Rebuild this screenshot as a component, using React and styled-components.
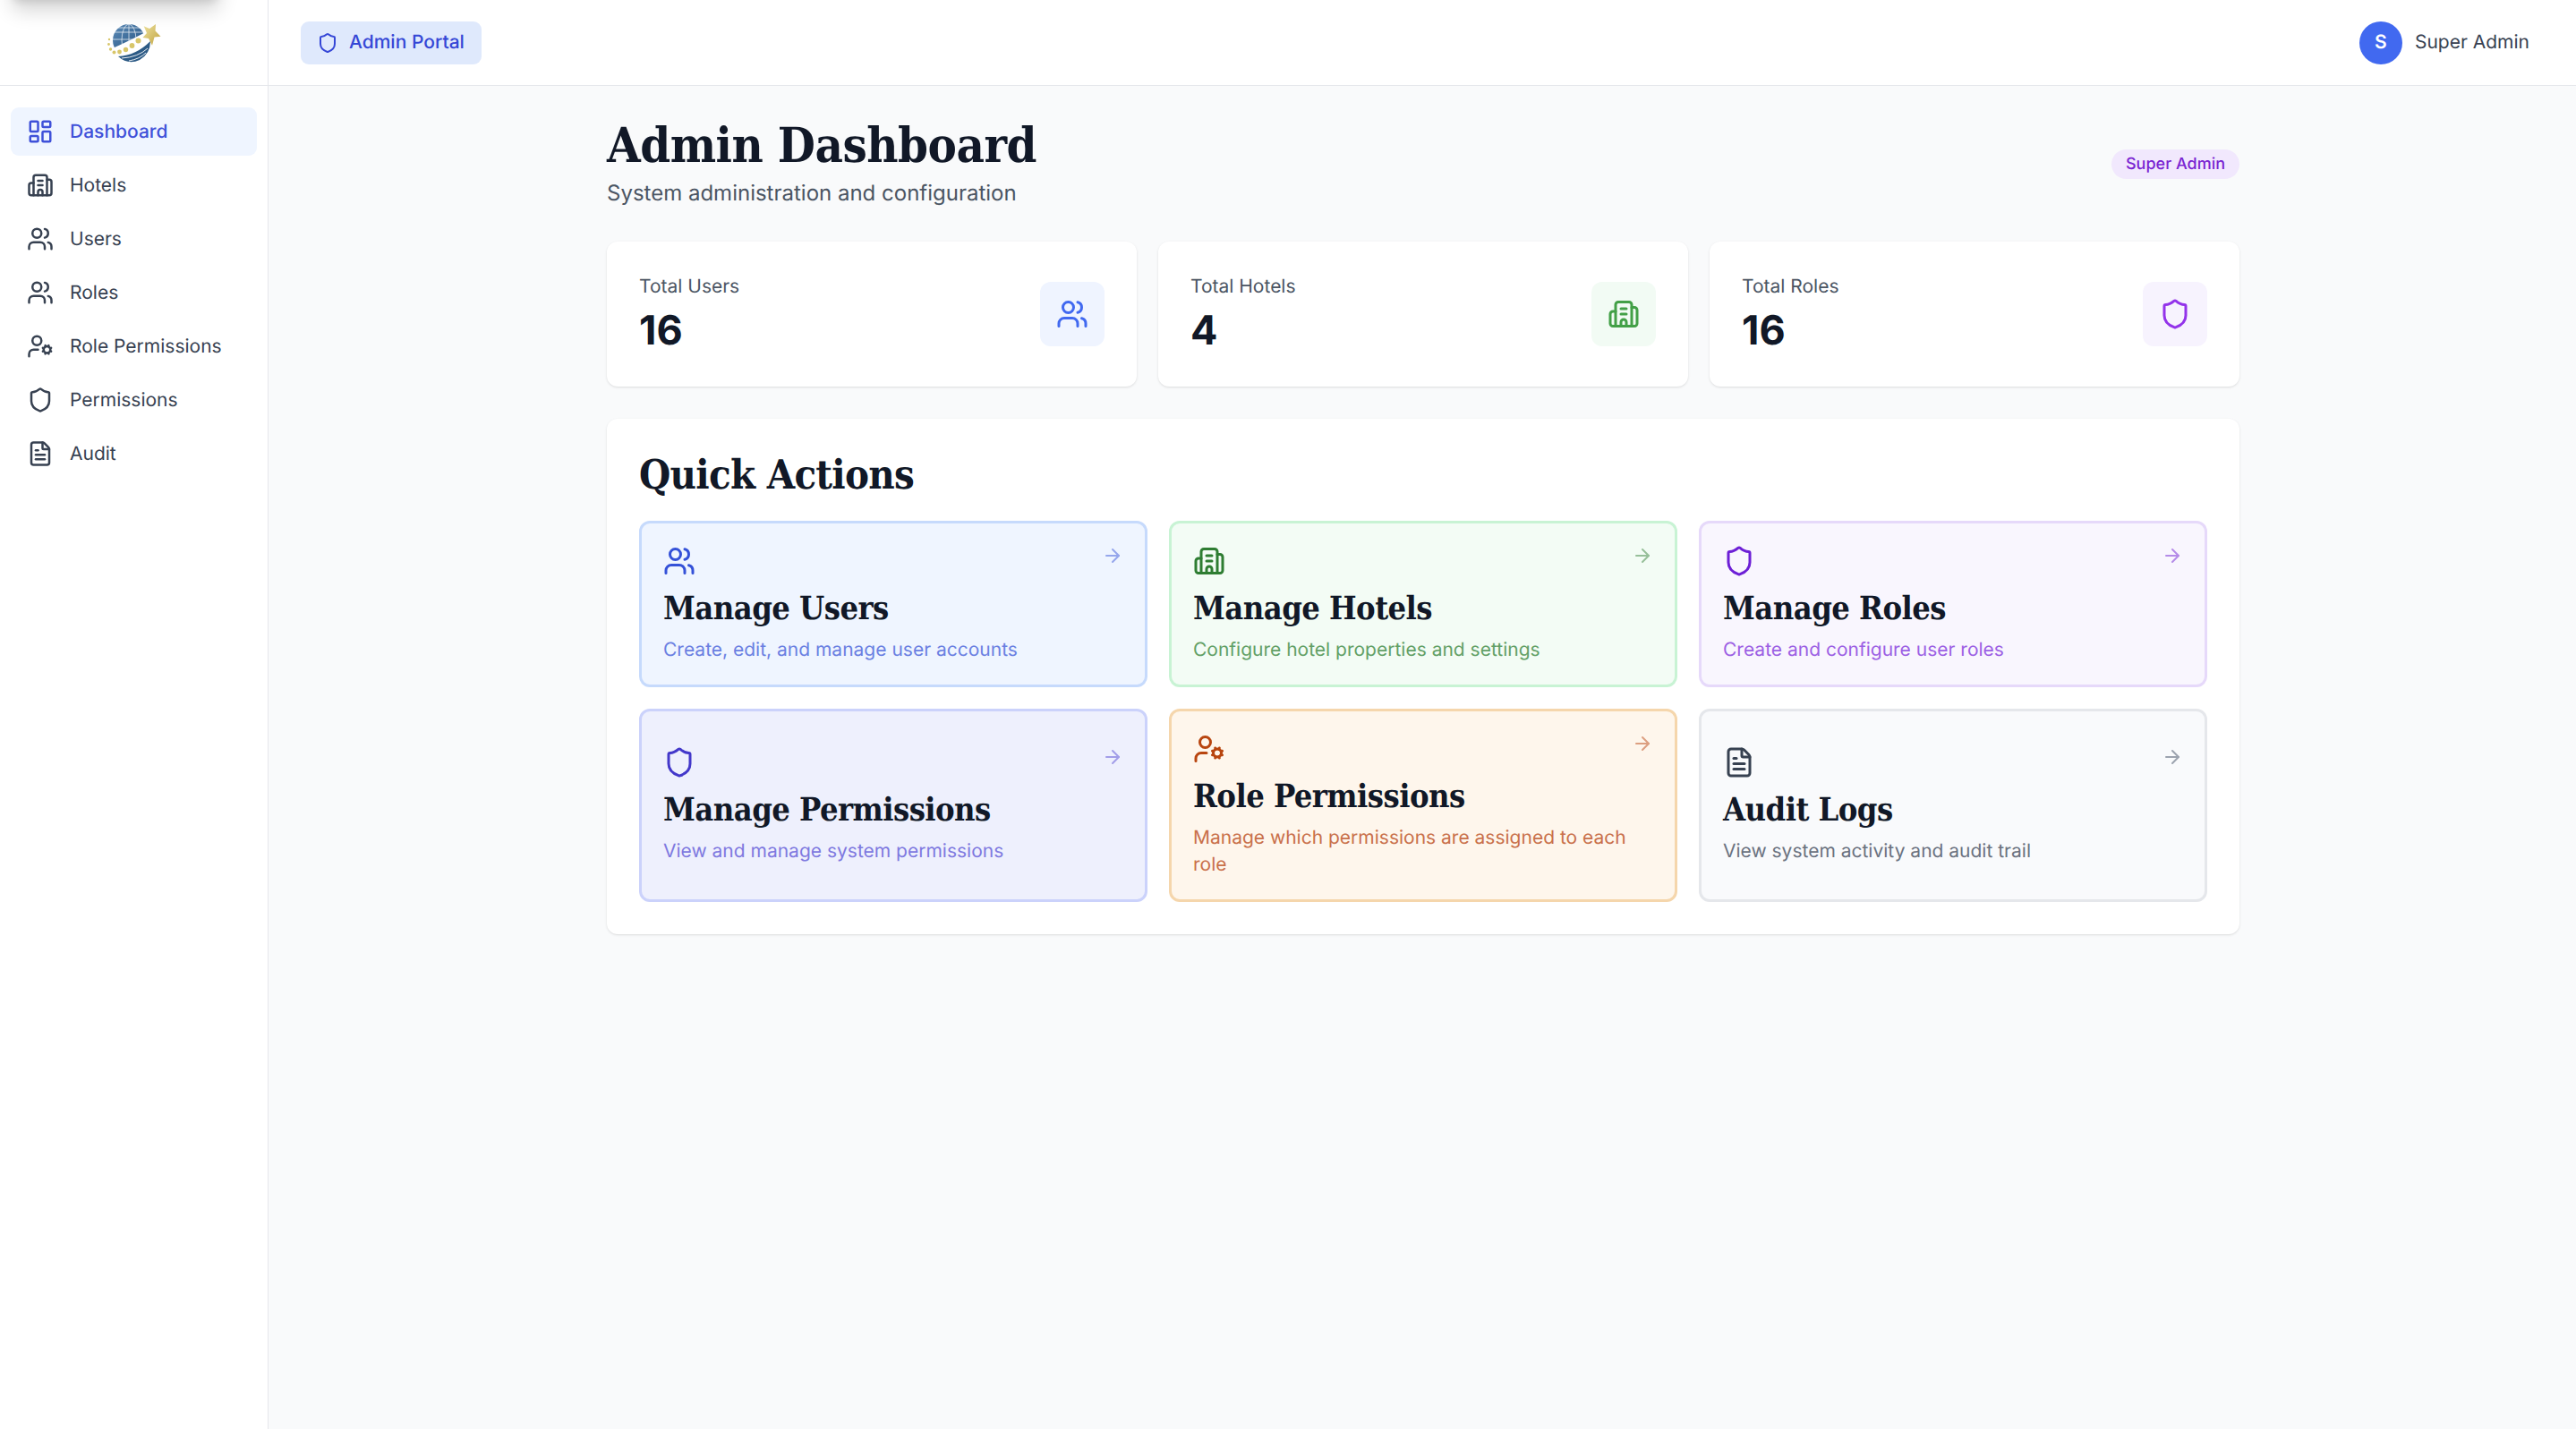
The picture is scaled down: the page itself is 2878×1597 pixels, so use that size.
import styled, { createGlobalStyle } from "styled-components";
import {
  ArrowRight,
  Building2,
  FileText,
  LayoutDashboard,
  Shield,
  UserCog,
  Users,
} from "lucide-react";

const SERIF = `"DejaVu Serif Condensed", "DejaVu Serif", serif`;
const SANS = `Inter, "Liberation Sans", sans-serif`;

const TONES = {
  blue: { bg: "#eff5ff", border: "#c6dafc", ink: "#3451d8", sub: "#6a80e2", arrow: "#95a6ec" },
  green: { bg: "#f3fcf5", border: "#c8f3d4", ink: "#2e7d32", sub: "#62a066", arrow: "#96bf99" },
  purple: { bg: "#f9f6fe", border: "#e6d9fa", ink: "#6d1fd6", sub: "#9c60e4", arrow: "#b48be8" },
  indigo: { bg: "#eef0fd", border: "#cbd2fb", ink: "#4338ca", sub: "#7e79e0", arrow: "#a29de8" },
  orange: { bg: "#fef6ec", border: "#f5d6ac", ink: "#b8450f", sub: "#c9704a", arrow: "#dc9f80" },
  gray: { bg: "#f9fafc", border: "#e5e7eb", ink: "#374151", sub: "#6b7280", arrow: "#9ca3af" },
};

const GlobalStyle = createGlobalStyle`
  html, body {
    margin: 0;
    padding: 0;
    background: #f9fafb;
    font-family: ${SANS};
    text-rendering: geometricPrecision;
  }
  * { box-sizing: border-box; }
`;

const Shell = styled.div`
  display: grid;
  grid-template-columns: 300px 1fr;
  min-height: 1597px;
  position: relative;
  overflow: hidden;
`;

const OffscreenMenu = styled.div`
  position: absolute;
  top: -60px;
  left: 10px;
  width: 238px;
  height: 60px;
  border-radius: 12px;
  background: #fff;
  box-shadow: 0 15px 22px -3px rgba(0, 0, 0, 0.16), 0 6px 9px -4px rgba(0, 0, 0, 0.1);
  z-index: 2;
`;

const Sidebar = styled.aside`
  background: #fff;
  border-right: 1px solid #e5e7eb;
`;

const LogoRow = styled.div`
  height: 96px;
  display: flex;
  align-items: center;
  justify-content: center;
  border-bottom: 1px solid #e5e7eb;
`;

const Nav = styled.nav`
  display: flex;
  flex-direction: column;
  gap: 6px;
  padding: 24px 12px;
`;

const NavItem = styled.a`
  height: 54px;
  display: flex;
  align-items: center;
  gap: 18px;
  padding: 0 18px;
  border-radius: 9px;
  font-size: 21px;
  font-weight: ${(p) => (p.$active ? 500 : 400)};
  color: ${(p) => (p.$active ? "#3f51d9" : "#374151")};
  background: ${(p) => (p.$active ? "#eff5ff" : "transparent")};
`;

const Main = styled.div`
  display: flex;
  flex-direction: column;
  min-width: 0;
`;

const Topbar = styled.header`
  height: 96px;
  display: flex;
  align-items: center;
  justify-content: space-between;
  padding: 0 52px 0 36px;
  background: #fff;
  border-bottom: 1px solid #e5e7eb;
`;

const PortalBadge = styled.div`
  height: 48px;
  display: flex;
  align-items: center;
  gap: 12px;
  padding: 0 19px 0 18px;
  border-radius: 9px;
  background: #dfe9fc;
  color: #3547d6;
  font-size: 21px;
  font-weight: 500;
`;

const UserBox = styled.div`
  display: flex;
  align-items: center;
  gap: 14px;
  font-size: 21px;
  color: #374151;
`;

const Avatar = styled.div`
  width: 48px;
  height: 48px;
  border-radius: 50%;
  display: flex;
  align-items: center;
  justify-content: center;
  background: #4169f0;
  color: #fff;
  font-size: 21px;
  font-weight: 600;
`;

const Content = styled.main`
  width: 100%;
  max-width: 1920px;
  margin: 0 auto;
  padding: 36px 47px 36px 49px;
`;

const PageHead = styled.div`
  display: flex;
  align-items: center;
  justify-content: space-between;
  margin-bottom: 36px;
`;

const Title = styled.h1`
  margin: 0 0 6px;
  font-family: ${SERIF};
  font-size: 54px;
  line-height: 60px;
  font-weight: 700;
  letter-spacing: -0.5px;
  color: #111827;
`;

const Subtitle = styled.p`
  margin: 0;
  font-size: 24px;
  line-height: 36px;
  color: #4b5563;
`;

const RolePill = styled.span`
  height: 33px;
  display: flex;
  align-items: center;
  padding: 0 16px;
  border-radius: 17px;
  background: #f1e8fd;
  color: #7a25d2;
  font-size: 18px;
  font-weight: 500;
`;

const StatGrid = styled.section`
  display: grid;
  grid-template-columns: repeat(3, 1fr);
  gap: 24px;
  margin-bottom: 36px;
`;

const Surface = styled.div`
  background: #fff;
  border-radius: 12px;
  box-shadow: 0 1px 3px rgba(0, 0, 0, 0.1), 0 1px 2px -1px rgba(0, 0, 0, 0.08);
`;

const StatCard = styled(Surface)`
  display: flex;
  align-items: center;
  justify-content: space-between;
  padding: 36px;
`;

const StatLabel = styled.div`
  font-size: 21px;
  line-height: 30px;
  color: #4b5563;
`;

const StatValue = styled.div`
  margin-top: 6px;
  font-size: 45px;
  line-height: 54px;
  font-weight: 700;
  color: #111827;
`;

const StatIcon = styled.div`
  width: 72px;
  height: 72px;
  border-radius: 12px;
  display: flex;
  align-items: center;
  justify-content: center;
  background: ${(p) => p.$bg};
  color: ${(p) => p.$ink};
`;

const ActionsPanel = styled(Surface)`
  padding: 36px;
`;

const PanelTitle = styled.h2`
  margin: 0 0 24px;
  font-family: ${SERIF};
  font-size: 45px;
  line-height: 54px;
  font-weight: 700;
  letter-spacing: -0.7px;
  color: #111827;
`;

const ActionGrid = styled.div`
  display: grid;
  grid-template-columns: repeat(3, 1fr);
  gap: 24px;
`;

const ActionCard = styled.a`
  display: flex;
  flex-direction: column;
  justify-content: center;
  padding: 24px 24px 23px;
  border: 3px solid ${(p) => TONES[p.$tone].border};
  border-radius: 12px;
  background: ${(p) => TONES[p.$tone].bg};
`;

const ActionTop = styled.div`
  display: flex;
  align-items: flex-start;
  justify-content: space-between;
  margin-bottom: 12px;
  color: ${(p) => TONES[p.$tone].ink};
`;

const ArrowSlot = styled.span`
  display: flex;
  color: ${(p) => TONES[p.$tone].arrow};
`;

const ActionTitle = styled.h3`
  margin: 0 0 9px;
  font-family: ${SERIF};
  font-size: 36px;
  line-height: 46px;
  font-weight: 700;
  letter-spacing: -0.55px;
  color: #111827;
`;

const ActionText = styled.p`
  margin: 0;
  font-size: 21px;
  line-height: 30px;
  color: ${(p) => TONES[p.$tone].sub};
`;

const NAV = [
  { label: "Dashboard", icon: LayoutDashboard, active: true },
  { label: "Hotels", icon: Building2 },
  { label: "Users", icon: Users },
  { label: "Roles", icon: Users },
  { label: "Role Permissions", icon: UserCog },
  { label: "Permissions", icon: Shield },
  { label: "Audit", icon: FileText },
];

const STATS = [
  { label: "Total Users", value: "16", icon: Users, bg: "#eff4ff", ink: "#4169f0" },
  { label: "Total Hotels", value: "4", icon: Building2, bg: "#f2fbf4", ink: "#43a047" },
  { label: "Total Roles", value: "16", icon: Shield, bg: "#f7f3fe", ink: "#9333ea" },
];

const ACTIONS = [
  { title: "Manage Users", text: "Create, edit, and manage user accounts", icon: Users, tone: "blue" },
  { title: "Manage Hotels", text: "Configure hotel properties and settings", icon: Building2, tone: "green" },
  { title: "Manage Roles", text: "Create and configure user roles", icon: Shield, tone: "purple" },
  { title: "Manage Permissions", text: "View and manage system permissions", icon: Shield, tone: "indigo" },
  { title: "Role Permissions", text: "Manage which permissions are assigned to each role", icon: UserCog, tone: "orange" },
  { title: "Audit Logs", text: "View system activity and audit trail", icon: FileText, tone: "gray" },
];

// brand mark, traced by eye from the reference
const Logo = () => (
  <svg width="60" height="48" viewBox="30 24 60 48">
    <defs>
      <linearGradient id="globe" x1="0" y1="0" x2="0.8" y2="1">
        <stop offset="0" stopColor="#5f8db8" />
        <stop offset="1" stopColor="#21507f" />
      </linearGradient>
      <linearGradient id="gold" x1="0" y1="0" x2="1" y2="1">
        <stop offset="0" stopColor="#efe3a0" />
        <stop offset="1" stopColor="#bfa23f" />
      </linearGradient>
      <clipPath id="upper">
        <path d="M30 24H76V34Q62 42 38 53H30Z" />
      </clipPath>
    </defs>
    <g clipPath="url(#upper)">
      <circle cx="54" cy="45" r="18" fill="url(#globe)" />
      <g fill="none" stroke="#fff" strokeWidth="0.8" opacity="0.85">
        <ellipse cx="54" cy="45" rx="8" ry="18" />
        <path d="M54 27V60M38 36H70M36 44H72M42 31H66" />
      </g>
    </g>
    <path d="M42 63Q62 62 78 46Q78 60 66 67Q53 73 42 63Z" fill="#2c5a85" />
    <path d="M46 65Q64 64 75 54M54 68Q66 66 73 59" fill="none" stroke="#fff" strokeWidth="0.9" />
    <g fill="#d8c66a">
      <circle cx="32" cy="44" r="1.2" />
      <circle cx="31.5" cy="49.5" r="1.4" />
      <circle cx="33.5" cy="55" r="1.7" />
      <circle cx="37.5" cy="58.5" r="2" />
      <circle cx="43.5" cy="58" r="2.4" />
      <circle cx="50.5" cy="55.5" r="2.7" />
      <circle cx="57.5" cy="51" r="2.9" />
      <circle cx="64.5" cy="45.5" r="3" />
    </g>
    <polygon
      points="70.7,29.3 77,32 84,27 83.5,34.5 89.5,40.7 82.5,41.5 80,50.7 76,43 69.5,42 74,37"
      fill="url(#gold)"
    />
  </svg>
);

export default function App() {
  return (
    <>
      <GlobalStyle />
      <Shell>
        <OffscreenMenu />
        <Sidebar>
          <LogoRow>
            <Logo />
          </LogoRow>
          <Nav>
            {NAV.map(({ label, icon: Icon, active }) => (
              <NavItem key={label} $active={active}>
                <Icon size={30} strokeWidth={2} />
                {label}
              </NavItem>
            ))}
          </Nav>
        </Sidebar>
        <Main>
          <Topbar>
            <PortalBadge>
              <Shield size={24} strokeWidth={2} />
              Admin Portal
            </PortalBadge>
            <UserBox>
              <Avatar>S</Avatar>
              Super Admin
            </UserBox>
          </Topbar>
          <Content>
            <PageHead>
              <div>
                <Title>Admin Dashboard</Title>
                <Subtitle>System administration and configuration</Subtitle>
              </div>
              <RolePill>Super Admin</RolePill>
            </PageHead>
            <StatGrid>
              {STATS.map(({ label, value, icon: Icon, bg, ink }) => (
                <StatCard key={label}>
                  <div>
                    <StatLabel>{label}</StatLabel>
                    <StatValue>{value}</StatValue>
                  </div>
                  <StatIcon $bg={bg} $ink={ink}>
                    <Icon size={36} strokeWidth={2} />
                  </StatIcon>
                </StatCard>
              ))}
            </StatGrid>
            <ActionsPanel>
              <PanelTitle>Quick Actions</PanelTitle>
              <ActionGrid>
                {ACTIONS.map(({ title, text, icon: Icon, tone }) => (
                  <ActionCard key={title} $tone={tone}>
                    <ActionTop $tone={tone}>
                      <Icon size={36} strokeWidth={2} />
                      <ArrowSlot $tone={tone}>
                        <ArrowRight size={24} strokeWidth={2} />
                      </ArrowSlot>
                    </ActionTop>
                    <ActionTitle>{title}</ActionTitle>
                    <ActionText $tone={tone}>{text}</ActionText>
                  </ActionCard>
                ))}
              </ActionGrid>
            </ActionsPanel>
          </Content>
        </Main>
      </Shell>
    </>
  );
}
